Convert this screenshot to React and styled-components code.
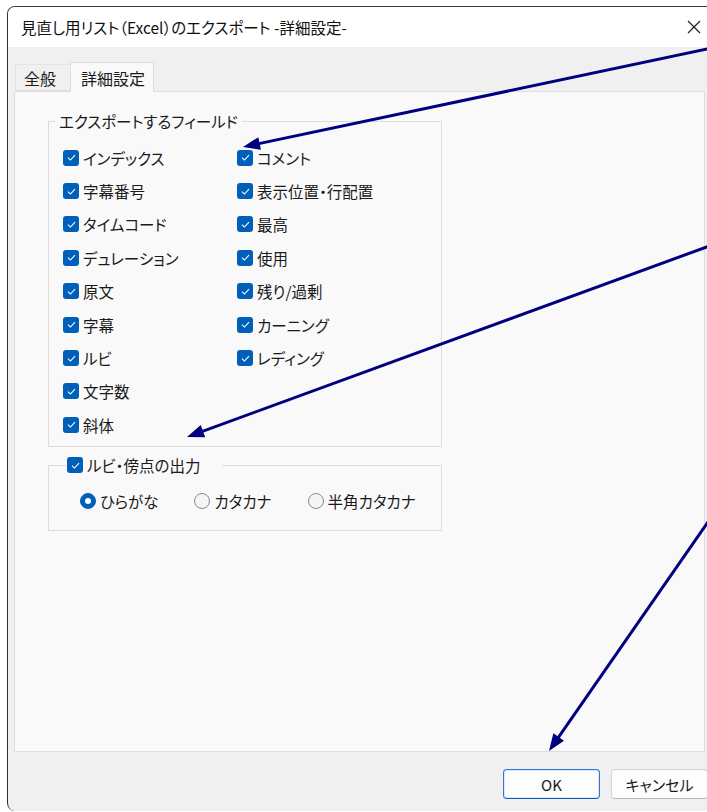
import React from 'react'
import styled, { createGlobalStyle } from 'styled-components'

const GlobalStyle = createGlobalStyle`
  html, body {
    margin: 0;
    background: #ffffff;
    overflow: hidden;
  }
  body {
    font-family: "Noto Sans CJK JP", "Noto Sans", sans-serif;
    font-feature-settings: "palt";
    color: #1a1a1a;
  }
`

const Page = styled.div`
  position: relative;
  width: 707px;
  height: 812px;
  overflow: hidden;
`

const Window = styled.div`
  margin: 6px 0 0 7px;
  width: 712px;
  height: 805px;
  box-sizing: border-box;
  border-left: 1px solid #2e2e2e;
  border-top: 1px solid #3a3a3a;
  border-radius: 8px 0 0 8px;
  background: #f0f0f0;
  display: flex;
  flex-direction: column;
  overflow: hidden;
`

const TitleBar = styled.div`
  height: 40px;
  flex: none;
  background: #ffffff;
  display: flex;
  align-items: center;
  padding-left: 13px;
  font-size: 15.5px;
  color: #111;
`

const Title = styled.span`
  flex: 1;
`

const CloseButton = styled.div`
  width: 46px;
  height: 40px;
  display: flex;
  align-items: center;
  justify-content: center;
  margin-right: 2px;
`

const Body = styled.div`
  flex: 1;
  display: flex;
  flex-direction: column;
  padding: 15px 0 0 6px;
`

const TabRow = styled.div`
  display: flex;
  align-items: flex-end;
  height: 29px;
  margin-left: 1px;
  position: relative;
  z-index: 1;
`

const Tab = styled.div`
  box-sizing: border-box;
  width: ${p => p.$width}px;
  height: ${p => (p.$active ? '30px' : '27px')};
  padding-left: ${p => (p.$active ? '10px' : '8px')};
  margin-bottom: ${p => (p.$active ? '-1px' : '0')};
  display: flex;
  align-items: center;
  font-size: 16px;
  background: ${p => (p.$active ? '#f9f9f9' : '#f0f0f0')};
  border: 1px solid ${p => (p.$active ? '#dedede' : '#e4e4e4')};
  border-bottom: ${p => (p.$active ? 'none' : '1px solid #dedede')};
  ${p => (p.$active ? '' : 'border-right: none;')}
`

const Panel = styled.div`
  box-sizing: border-box;
  width: 691px;
  height: 661px;
  background: #f9f9f9;
  border: 1px solid #dedede;
  padding: 19px 0 0 33px;
  display: flex;
  flex-direction: column;
  gap: 8px;
`

const GroupBox = styled.fieldset`
  box-sizing: border-box;
  width: 394px;
  height: ${p => p.$height}px;
  margin: 0;
  padding: 0;
  border: 1px solid #dcdcdc;
  min-width: 0;
`

const Legend = styled.legend`
  font-size: 15.5px;
  line-height: 20px;
  margin-left: ${p => p.$offset}px;
  padding: 0 ${p => p.$padRight}px 0 ${p => p.$padLeft}px;
  display: flex;
  align-items: center;
  gap: 4px;
`

const FieldGrid = styled.div`
  display: grid;
  grid-template-columns: 174px 1fr;
  grid-template-rows: repeat(9, 33.4px);
  grid-auto-flow: column;
  padding: 10px 0 0 14px;
`

const Item = styled.label`
  display: flex;
  align-items: center;
  gap: 4px;
  font-size: 15.5px;
`

const Box = styled.span`
  width: 16px;
  height: 16px;
  flex: none;
  border-radius: 3px;
  background: #005fb8;
  display: flex;
  align-items: center;
  justify-content: center;
`

const RadioRow = styled.div`
  display: flex;
  align-items: center;
  gap: 36px;
  padding-left: 31px;
  margin-top: 15px;
`

const RadioDot = styled.span`
  width: 16px;
  height: 16px;
  flex: none;
  box-sizing: border-box;
  border-radius: 50%;
  background: ${p => (p.$on ? '#005fb8' : '#f5f5f5')};
  border: 1px solid ${p => (p.$on ? '#005fb8' : '#8a8a8a')};
  display: flex;
  align-items: center;
  justify-content: center;
  &::after {
    content: '';
    display: ${p => (p.$on ? 'block' : 'none')};
    width: 6px;
    height: 6px;
    border-radius: 50%;
    background: #ffffff;
  }
`

const RadioItem = styled.label`
  display: flex;
  align-items: center;
  gap: 4px;
  font-size: 15.5px;
`

const Footer = styled.div`
  display: flex;
  justify-content: flex-end;
  gap: 11px;
  padding: 17px 11px 0 0;
`

const Button = styled.div`
  box-sizing: border-box;
  width: 97px;
  height: 30px;
  border-radius: 4px;
  background: #fdfdfd;
  border: 1px solid ${p => (p.$primary ? '#2b79c8' : '#d2d2d2')};
  border-bottom-color: ${p => (p.$primary ? '#0f5fae' : '#b8b8b8')};
  ${p => (p.$primary ? 'box-shadow: inset 0 0 0 1px #d9e8f7;' : '')}
  display: flex;
  align-items: center;
  justify-content: center;
  font-size: 15px;
  font-family: "Noto Sans CJK JP", "Liberation Sans", sans-serif;
`

const Overlay = styled.svg`
  position: absolute;
  left: 0;
  top: 0;
  pointer-events: none;
`

const Check = () => (
  <svg width="11" height="11" viewBox="0 0 10 10">
    <path d="M1.8 5.2 L4 7.3 L8.2 2.8" fill="none" stroke="#ffffff" strokeWidth="1" />
  </svg>
)

const CheckItem = ({ label }) => (
  <Item>
    <Box><Check /></Box>
    {label}
  </Item>
)

const Arrow = ({ x1, y1, x2, y2 }) => {
  const dx = x2 - x1
  const dy = y2 - y1
  const len = Math.hypot(dx, dy)
  const ux = dx / len
  const uy = dy / len
  const hl = 17
  const hw = 6.5
  const bx = x2 - ux * hl
  const by = y2 - uy * hl
  const pts = [
    [x2, y2],
    [bx - uy * hw, by + ux * hw],
    [bx + uy * hw, by - ux * hw],
  ]
  return (
    <g>
      <line x1={x1} y1={y1} x2={bx + ux * 2} y2={by + uy * 2} stroke="#000080" strokeWidth="3" />
      <polygon points={pts.map(p => p.join(',')).join(' ')} fill="#000080" />
    </g>
  )
}

const left = ['インデックス', '字幕番号', 'タイムコード', 'デュレーション', '原文', '字幕', 'ルビ', '文字数', '斜体']
const right = ['コメント', '表示位置・行配置', '最高', '使用', '残り/過剰', 'カーニング', 'レディング']

const App = () => {
  return (
    <Page>
      <GlobalStyle />
      <Window>
        <TitleBar>
          <Title>見直し用リスト（Excel）のエクスポート -詳細設定-</Title>
          <CloseButton>
            <svg width="14" height="14" viewBox="0 0 14 14">
              <path d="M1 1 L13 13 M13 1 L1 13" stroke="#1a1a1a" strokeWidth="1.1" />
            </svg>
          </CloseButton>
        </TitleBar>
        <Body>
          <TabRow>
            <Tab $width={55}>全般</Tab>
            <Tab $active $width={84}>詳細設定</Tab>
          </TabRow>
          <Panel>
            <GroupBox $height={336}>
              <Legend $offset={6} $padLeft={4} $padRight={4}>エクスポートするフィールド</Legend>
              <FieldGrid>
                {left.map(l => <CheckItem key={l} label={l} />)}
                {right.map(l => <CheckItem key={l} label={l} />)}
              </FieldGrid>
            </GroupBox>
            <GroupBox $height={76}>
              <Legend $offset={17} $padLeft={1} $padRight={22}>
                <Box><Check /></Box>
                ルビ・傍点の出力
              </Legend>
              <RadioRow>
                <RadioItem><RadioDot $on />ひらがな</RadioItem>
                <RadioItem><RadioDot />カタカナ</RadioItem>
                <RadioItem><RadioDot />半角カタカナ</RadioItem>
              </RadioRow>
            </GroupBox>
          </Panel>
          <Footer>
            <Button $primary>OK</Button>
            <Button>キャンセル</Button>
          </Footer>
        </Body>
      </Window>
      <Overlay width="707" height="812">
        <Arrow x1={712} y1={48} x2={243} y2={147} />
        <Arrow x1={712} y1={245} x2={187} y2={437} />
        <Arrow x1={710} y1={519} x2={549} y2={751} />
      </Overlay>
    </Page>
  )
}

export default App
